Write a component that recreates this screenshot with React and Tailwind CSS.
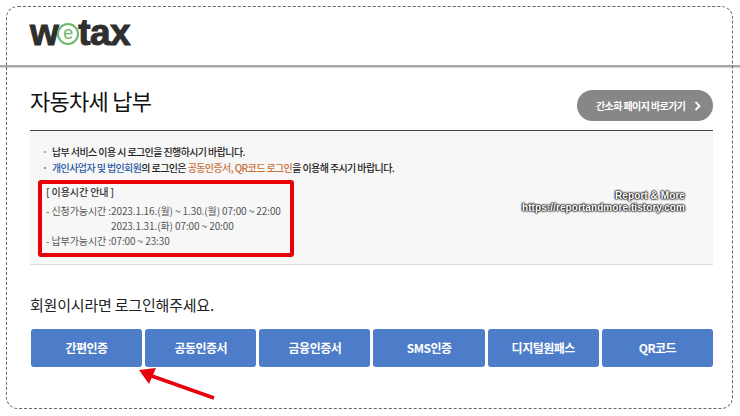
import React from "react";

const loginTabs = ["간편인증", "공동인증서", "금융인증서", "SMS인증", "디지털원패스", "QR코드"];

const kr = "font-['Noto_Sans_CJK_KR','Noto_Sans',sans-serif]";

export default function App() {
  return (
    <div className={`relative w-[740px] h-[416px] overflow-hidden bg-white ${kr}`}>
      {/* capture frame */}
      <div className="absolute left-[6px] top-[6px] w-[727px] h-[403px] rounded-[12px] border border-dashed border-[#666] pointer-events-none" />

      {/* Logo */}
      <header className="h-[65px] pl-[30px] pt-[17px]">
        <div className="flex items-center h-[30px] font-['Liberation_Sans',sans-serif] font-bold text-[#2f2f2f] text-[37px] leading-none tracking-[-0.6px]">
          <span className="font-black [-webkit-text-stroke:1px_#2f2f2f]">w</span>
          <span className="flex items-center justify-center w-[22px] h-[22px] mt-[3px] mx-[-1px] rounded-full border-2 border-[#6cb96c] bg-white text-[#6cb96c] text-[18px] font-normal tracking-normal leading-none pb-[2px]">
            e
          </span>
          <span className="font-black [-webkit-text-stroke:1px_#2f2f2f]">tax</span>
        </div>
      </header>
      <div className="h-[3px] bg-[#a9a9a9] border-b border-[#d4d4d4]" />

      <main className="px-[30px] pr-[27px]">
        {/* Title */}
        <div className="flex items-center justify-between h-[62px]">
          <h1 className="text-[22px] leading-none font-normal text-[#111] tracking-[-0.75px] mt-[2px]">자동차세 납부</h1>
          <button className="flex items-center gap-[9px] h-[31px] w-[136px] mt-[13px] pl-[19px] rounded-full bg-[#878787] text-white text-[10px] font-bold tracking-[-0.6px]">
            간소화 페이지 바로가기
            <svg width="7" height="10" viewBox="0 0 7 10" fill="none" stroke="#fff" strokeWidth="1.8">
              <path d="M1.5 1l4 4-4 4" />
            </svg>
          </button>
        </div>

        {/* Notice */}
        <section className="relative h-[135px] border-t border-t-[#444] border-b border-b-[#ddd] bg-[#f7f7f7]">
          <ul className="pt-[13px] pl-[14px] text-[10px] leading-[16px] font-medium text-[#222] tracking-[-0.6px]">
            <li className="flex items-center gap-[6px]">
              <span className="w-[2px] h-[2px] bg-[#aaa]" />
              <span>납부 서비스 이용 시 로그인을 진행하시기 바랍니다.</span>
            </li>
            <li className="flex items-center gap-[6px]">
              <span className="w-[2px] h-[2px] bg-[#c77]" />
              <span>
                <span className="text-[#2a5ca8]">개인사업자 및 법인회원</span>의 로그인은{" "}
                <span className="text-[#c8703a]">공동인증서, QR코드 로그인</span>을 이용해 주시기 바랍니다.
              </span>
            </li>
          </ul>

          <div className="mt-[4px] ml-[8px] w-[256px] h-[77px] rounded-[3px] border-4 border-[#e8000b] pl-[4px] text-[10px] text-[#555] tracking-[-0.1px]">
            <p className="leading-[16px] font-medium text-[#333]">[ 이용시간 안내 ]</p>
            <div className="mt-[3px] leading-[15px]">
              <p className="flex">
                <span className="w-[65px] shrink-0">- 신청가능시간 :</span>
                <span>2023.1.16.(월) ~ 1.30.(월) 07:00 ~ 22:00</span>
              </p>
              <p className="pl-[65px]">2023.1.31.(화) 07:00 ~ 20:00</p>
              <p className="flex">
                <span className="w-[65px] shrink-0">- 납부가능시간 :</span>
                <span>07:00 ~ 23:30</span>
              </p>
            </div>
          </div>

          {/* watermark */}
          <div className="absolute right-[28px] top-[59px] text-right font-['Liberation_Sans',sans-serif] font-bold text-[10px] tracking-[0.08px] leading-[12px] text-white [text-shadow:0_0_1px_#111,0_0_2px_#111,0_0_2px_#111,0_0_2px_#111]">
            <p>Report &amp; More</p>
            <p>https://reportandmore.tistory.com</p>
          </div>
        </section>

        {/* Login */}
        <p className="mt-[29px] text-[15px] leading-[22px] text-[#222] tracking-[-0.2px]">회원이시라면 로그인해주세요.</p>
        <div className="mt-[13px] ml-px w-[682px] grid grid-cols-6 gap-[3px]">
          {loginTabs.map((tab) => (
            <button
              key={tab}
              className="h-[38px] rounded-[3px] bg-[#4d7cc9] text-white text-[12px] font-bold tracking-[-0.5px]"
            >
              {tab}
            </button>
          ))}
        </div>
      </main>

      {/* red arrow */}
      <svg className="absolute left-[135px] top-[365px]" width="85" height="38" viewBox="0 0 85 38">
        <path d="M79 33L14 10" stroke="#e8000b" strokeWidth="3.5" />
        <path d="M4 5L21 3L14 19Z" fill="#e8000b" />
      </svg>
    </div>
  );
}
